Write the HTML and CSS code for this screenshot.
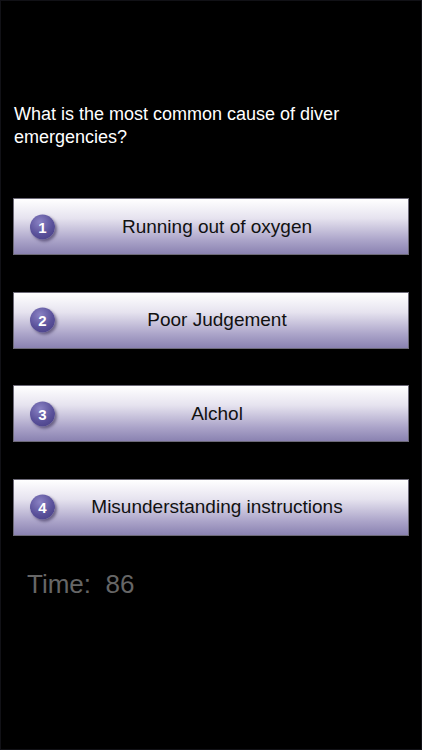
FILE: index.html
```html
<!DOCTYPE html>
<html lang="en">
<head>
    <meta charset="UTF-8">
    <meta name="viewport" content="width=device-width, initial-scale=1.0">
    <title>Dive Quiz</title>
    <link rel="stylesheet" href="styles.css">
</head>
<body>
    <main class="screen">
        <p class="question">What is the most common cause of diver emergencies?</p>

        <div class="answers">
            <button class="answer">
                <span class="badge">1</span>
                <span class="answer-text">Running out of oxygen</span>
            </button>
            <button class="answer">
                <span class="badge">2</span>
                <span class="answer-text">Poor Judgement</span>
            </button>
            <button class="answer">
                <span class="badge">3</span>
                <span class="answer-text">Alchol</span>
            </button>
            <button class="answer">
                <span class="badge">4</span>
                <span class="answer-text">Misunderstanding instructions</span>
            </button>
        </div>

        <div class="timer">Time:&nbsp; 86</div>
    </main>
</body>
</html>
```

FILE: styles.css
```css
* {
    margin: 0;
    padding: 0;
    box-sizing: border-box;
}
html, body {
    height: 100%;
}
body {
    font-family: "Liberation Sans", Arial, sans-serif;
    background-color: #000;
}
.screen {
    height: 100%;
    border: 1px solid #111116;
    padding: 102px 12px 0 12px;
}

/* Question */
.question {
    color: #fff;
    font-size: 18px;
    line-height: 23px;
    padding-left: 1px;
    padding-right: 40px;
}

/* Answer buttons */
.answers {
    display: flex;
    flex-direction: column;
    gap: 36.5px;
    margin-top: 49px;
}
.answer {
    position: relative;
    display: flex;
    align-items: center;
    justify-content: center;
    width: 396px;
    height: 57px;
    padding-left: 12px;
    border: 1px solid #6d6a78;
    background: linear-gradient(to bottom, #ffffff 0%, #e6e3ef 35%, #aba4c9 75%, #8a82b1 100%);
    font-family: inherit;
    cursor: pointer;
}
.answer-text {
    color: #111;
    font-size: 19px;
}
.badge {
    position: absolute;
    left: 16px;
    top: 50%;
    transform: translateY(-50%);
    width: 25px;
    height: 25px;
    border-radius: 50%;
    display: flex;
    align-items: center;
    justify-content: center;
    color: #fff;
    font-size: 15px;
    font-weight: bold;
    background: radial-gradient(circle at 40% 30%, #8a82c4 0%, #5a519a 55%, #433a80 100%);
    box-shadow: 2px 2px 3px rgba(40, 30, 70, 0.55);
}

/* Timer */
.timer {
    color: #666;
    font-size: 26px;
    margin-top: 33px;
    padding-left: 14px;
}
```
